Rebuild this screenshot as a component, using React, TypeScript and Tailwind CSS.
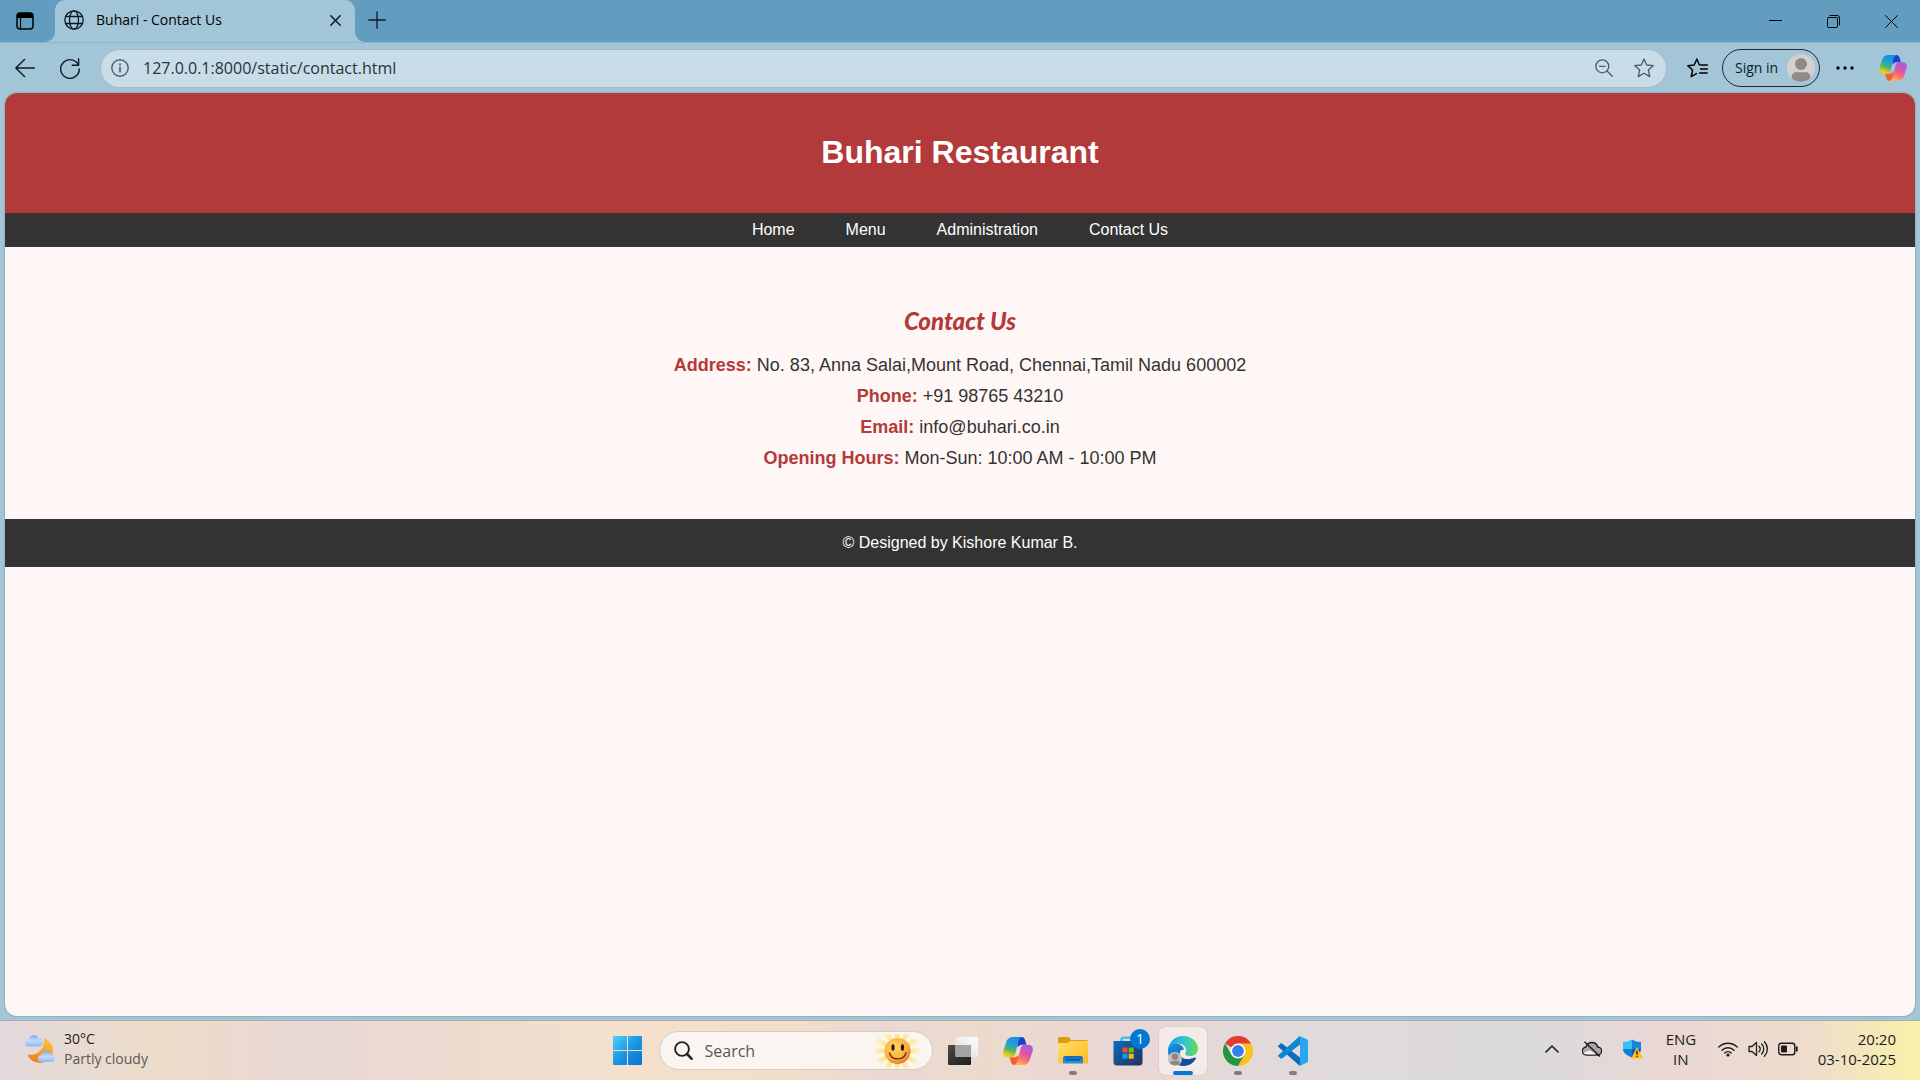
import React from "react";

const pageFont = "font-['Liberation_Sans',Arial,sans-serif]";
const uiFont = "font-['Open_Sans','Noto_Sans',sans-serif]";

/* ---------- shared drawings ---------- */

function CopilotIcon({ id, className }: { id: string; className: string }) {
  const lobe =
    "M10.500 0H19c-2.200.6-3 2.300-3.700 4.500L12.500 16c-.9 3.200-2 4.300-4.200 4.300H4.500C1 20.300-.5 17.500.3 14L3.300 5C4.500 1.500 6.500 0 10.500 0z";
  return (
    <svg viewBox="0 0 30 28" className={className} aria-hidden="true">
      <defs>
        <linearGradient id={`${id}-cool`} x1="0.6" y1="0" x2="0.3" y2="1">
          <stop offset="0" stopColor="#1a8df0" />
          <stop offset="0.35" stopColor="#1f9fd8" />
          <stop offset="0.65" stopColor="#52b56a" />
          <stop offset="0.9" stopColor="#e9cc13" />
        </linearGradient>
        <linearGradient id={`${id}-warm`} x1="0.3" y1="1" x2="0.7" y2="0">
          <stop offset="0" stopColor="#a45bf0" />
          <stop offset="0.45" stopColor="#e2559b" />
          <stop offset="0.75" stopColor="#fb7b6b" />
          <stop offset="1" stopColor="#ffb45a" />
        </linearGradient>
      </defs>
      <path d="M13 0h5.500c2 0 3 1 3.600 3l1.400 4.700h-4.500c-2 0-3.500.8-4.200 2.800z" fill="#1b45c4" />
      <path d="M17 28h-5.500c-2 0-3-1-3.600-3l-1.400-4.700H11c2 0 3.500-.8 4.200-2.800z" fill="#f4602f" />
      <path d={lobe} fill={`url(#${id}-cool)`} />
      <path d={lobe} transform="rotate(180 15 14)" fill={`url(#${id}-warm)`} />
    </svg>
  );
}

const line = {
  fill: "none",
  stroke: "currentColor",
  strokeLinecap: "round" as const,
  strokeLinejoin: "round" as const,
};

/* ---------- browser frame ---------- */

function TabStrip() {
  return (
    <div className="flex h-[42px] shrink-0 items-stretch bg-[#629dbf] text-[#0c1a22]">
      <div className="flex w-[55px] items-center pl-4">
        <button aria-label="Tab actions" className="h-[18px] w-[18px]">
          <svg viewBox="0 0 18 18" className="h-full w-full text-black">
            <rect x="1" y="1" width="16" height="16" rx="3" {...line} strokeWidth="1.5" />
            <path d="M1 6V4a3 3 0 0 1 3-3h10a3 3 0 0 1 3 3v2z" fill="currentColor" />
            <path d="M4.500 6v11" {...line} strokeWidth="1.200" />
          </svg>
        </button>
      </div>
      <div className="relative flex w-[300px] items-center rounded-t-[10px] bg-[#a3c5d8] pt-[2px] pb-1">
        <svg viewBox="0 0 10 10" className="absolute bottom-0 -left-[10px] h-[10px] w-[10px]">
          <path d="M10 0v10H0A10 10 0 0 0 10 0z" fill="#a3c5d8" />
        </svg>
        <svg viewBox="0 0 10 10" className="absolute -right-[10px] bottom-0 h-[10px] w-[10px]">
          <path d="M0 0v10h10A10 10 0 0 1 0 0z" fill="#a3c5d8" />
        </svg>
        <svg viewBox="0 0 20 20" className="ml-[9px] h-5 w-5">
          <g {...line} strokeWidth="1.300">
            <circle cx="10" cy="10" r="9.200" />
            <ellipse cx="10" cy="10" rx="4.500" ry="9.200" />
            <path d="M1.800 6.500h16.400M1.800 13.500h16.400" />
          </g>
        </svg>
        <span className="ml-3 grow text-sm leading-5 text-black">Buhari - Contact Us</span>
        <button aria-label="Close tab" className="mr-[14px] h-[11px] w-[11px]">
          <svg viewBox="0 0 11 11" className="h-full w-full">
            <path d="M.8.8l9.400 9.400M10.200.8L.8 10.200" {...line} strokeWidth="1.500" />
          </svg>
        </button>
      </div>
      <button aria-label="New tab" className="mb-[3px] ml-[13px] w-[18px]">
        <svg viewBox="0 0 18 18" className="h-[18px] w-[18px]">
          <path d="M9 .8v16.400M.8 9h16.400" {...line} strokeWidth="1.300" />
        </svg>
      </button>
      <div className="ml-auto flex items-stretch text-black">
        <button aria-label="Minimize" className="flex w-[58px] items-center justify-center">
          <svg viewBox="0 0 13 13" className="h-[13px] w-[13px]">
            <path d="M0 5.500h13" fill="none" stroke="currentColor" strokeWidth="1" />
          </svg>
        </button>
        <button aria-label="Restore" className="flex w-[58px] items-center justify-center">
          <svg viewBox="0 0 13 13" className="h-[13px] w-[13px]">
            <rect x=".5" y="2.500" width="10" height="10" rx="1" {...line} />
            <path d="M3 .5h7a2.500 2.500 0 0 1 2.500 2.500v7" {...line} />
          </svg>
        </button>
        <button aria-label="Close window" className="flex w-[58px] items-center justify-center">
          <svg viewBox="0 0 13 13" className="h-[13px] w-[13px]">
            <path d="M.5.5l12 12M12.500.5l-12 12" {...line} />
          </svg>
        </button>
      </div>
    </div>
  );
}

function Toolbar() {
  return (
    <div className="flex h-[51px] shrink-0 items-center border-t border-[#8bb6cf] text-[#0c1a22]">
      <button aria-label="Back" className="ml-[15px] h-5 w-5">
        <svg viewBox="0 0 20 20" className="h-full w-full">
          <path d="M19.300 10H.8M9.500 1.500L.8 10l8.700 8.500" {...line} strokeWidth="1.400" />
        </svg>
      </button>
      <button aria-label="Refresh" className="ml-[25px] h-[22px] w-5">
        <svg viewBox="0 0 20 22" className="h-full w-full">
          <path d="M18.500 8.200A9.300 9.300 0 1 0 19.300 12M18.600 1.800v6.400h-6.400" {...line} strokeWidth="1.400" />
        </svg>
      </button>
      <div className="ml-5 flex h-[39px] grow items-center rounded-full border border-[#a9b9c3] bg-[#c9dde8] text-[#4b5c67]">
        <button aria-label="Site information" className="ml-[10px] h-[18px] w-[18px]">
          <svg viewBox="0 0 18 18" className="h-full w-full">
            <circle cx="9" cy="9" r="8.200" {...line} strokeWidth="1.400" />
            <path d="M9 8v5" {...line} strokeWidth="1.600" />
            <circle cx="9" cy="5.300" r="1.100" fill="currentColor" />
          </svg>
        </button>
        <input
          aria-label="Address"
          defaultValue="127.0.0.1:8000/static/contact.html"
          className="ml-[14px] min-w-0 grow bg-transparent text-base leading-6 text-[#25333c] outline-none"
        />
        <button aria-label="Zoom" className="h-[18px] w-[18px]">
          <svg viewBox="0 0 18 18" className="h-full w-full">
            <circle cx="7.300" cy="7.300" r="6.500" {...line} strokeWidth="1.300" />
            <path d="M12 12l5.300 5.300M4.500 7.300h5.600" {...line} strokeWidth="1.300" />
          </svg>
        </button>
        <button aria-label="Add to favorites" className="mr-3 ml-[21px] h-5 w-5">
          <svg viewBox="0 0 20 20" className="h-full w-full">
            <path d="M10 1l2.700 6 6.500.7-4.900 4.300 1.500 6.600L10 15.300l-5.800 3.300L5.700 12 .8 7.700 7.300 7z" {...line} strokeWidth="1.300" />
          </svg>
        </button>
      </div>
      <button aria-label="Favorites" className="ml-5 h-5 w-[21px]">
        <svg viewBox="0 0 21 20" className="h-full w-full text-black">
          <path d="M12.500 6.800h-.3L9.900 1 7.200 7 .8 7.700 5.600 12l-1.400 6.600 5.200-3M13.500 6.900h6.800M13.500 11h6.800M12.500 15h7.800" {...line} strokeWidth="1.500" />
        </svg>
      </button>
      <button className="ml-[14px] flex h-[38px] w-[98px] items-center justify-between rounded-full border border-[#1b2a33] pr-1 pl-3 text-sm leading-5">
        Sign in
        <svg viewBox="0 0 28 28" className="h-7 w-7" aria-hidden="true">
          <circle cx="14" cy="14" r="14" fill="#d3d0cd" />
          <circle cx="14" cy="10" r="6" fill="#8f8a87" />
          <path d="M4.500 24c0-4 2-5.800 5-5.800h9c3 0 5 1.800 5 5.800a14 14 0 0 1-19 0z" fill="#8f8a87" />
        </svg>
      </button>
      <button aria-label="Settings and more" className="ml-4 h-4 w-[18px]">
        <svg viewBox="0 0 18 16" className="h-full w-full text-black" fill="currentColor">
          <circle cx="2" cy="8" r="1.700" />
          <circle cx="9" cy="8" r="1.700" />
          <circle cx="16" cy="8" r="1.700" />
        </svg>
      </button>
      <button aria-label="Copilot" className="mr-[13px] ml-[25px]">
        <CopilotIcon id="bar-copilot" className="h-[26px] w-7" />
      </button>
    </div>
  );
}

/* ---------- web page ---------- */

const links = ["Home", "Menu", "Administration", "Contact Us"];

const details = [
  ["Address:", "No. 83, Anna Salai,Mount Road, Chennai,Tamil Nadu 600002"],
  ["Phone:", "+91 98765 43210"],
  ["Email:", "info@buhari.co.in"],
  ["Opening Hours:", "Mon-Sun: 10:00 AM - 10:00 PM"],
];

function ContactPage() {
  return (
    <div className={`mx-[5px] mb-1 grow overflow-hidden rounded-xl bg-[#fff7f5] text-center shadow-[0_0_2px_#5f8296] ${pageFont}`}>
      <header className="bg-[#b23a3a] pt-[41px] pb-[43px] text-white">
        <h1 className="text-[32px] leading-9 font-bold">Buhari Restaurant</h1>
      </header>
      <nav className="flex justify-center gap-[51px] bg-[#333333] py-2 text-base leading-[18px] text-white">
        {links.map((l) => (
          <a key={l} href="#">
            {l}
          </a>
        ))}
      </nav>
      <main className="pt-[60px] pb-[45px] text-[#333333]">
        <h2 className="mb-[15px] font-['Gill_Sans_MT',Lato,sans-serif] text-2xl leading-7 font-black text-[#b23a3a] italic">
          Contact Us
        </h2>
        {details.map(([label, value]) => (
          <p key={label} className="text-lg leading-[31px]">
            <strong className="text-[#b23a3a]">{label}</strong> {value}
          </p>
        ))}
      </main>
      <footer className="bg-[#333333] py-[15px] text-base leading-[18px] text-white">
        © Designed by Kishore Kumar B.
      </footer>
    </div>
  );
}

/* ---------- taskbar ---------- */

function WeatherIcon() {
  return (
    <svg viewBox="0 0 30 28" className="h-7 w-[30px]" aria-hidden="true">
      <defs>
        <linearGradient id="moon" x1="0.8" y1="0" x2="0.2" y2="1">
          <stop offset="0" stopColor="#f6c544" />
          <stop offset="1" stopColor="#ef7d1a" />
        </linearGradient>
        <linearGradient id="cloud" x1="0" y1="0" x2="0" y2="1">
          <stop offset="0" stopColor="#7fa9f2" />
          <stop offset="0.5" stopColor="#c3dafc" />
          <stop offset="1" stopColor="#8fb4f3" />
        </linearGradient>
      </defs>
      <path d="M19 3c7 3 10.500 9 8.500 15.500C25 27 16 30 9 26.500 5.500 25 3.500 22.500 2.500 19.500 12 21.500 20 14.500 19 3z" fill="url(#moon)" />
      <path d="M4 11.500a3.500 3.500 0 0 1-.4-7C4.500 1.500 6.500 0 9 0c2.300 0 4 1.300 4.700 3.500C16 3.500 18 5.500 18 7.700c0 2.200-1.600 3.800-3.800 3.800z" fill="url(#cloud)" />
      <path d="M16 27a3.400 3.400 0 0 1-.2-6.700c.8-2.800 2.700-4.300 5.200-4.300 2.400 0 4 1.200 4.700 3.400 2.500 0 4.300 1.700 4.300 3.900S28.300 27 26.200 27z" fill="url(#cloud)" />
    </svg>
  );
}

function SunIcon() {
  return (
    <svg viewBox="0 0 48 34" className="h-[34px] w-12" aria-hidden="true">
      <defs>
        <radialGradient id="sun" cx="0.4" cy="0.35" r="0.7">
          <stop offset="0" stopColor="#ffd85e" />
          <stop offset="0.7" stopColor="#fbab38" />
          <stop offset="1" stopColor="#df7038" />
        </radialGradient>
        <radialGradient id="ray" gradientUnits="userSpaceOnUse" cx="24" cy="17" r="25">
          <stop offset="0.5" stopColor="#fde476" />
          <stop offset="1" stopColor="#fde476" stopOpacity="0" />
        </radialGradient>
      </defs>
      <g fill="url(#ray)">
        {[0, 30, 60, 90, 120, 150, 180, 210, 240, 270, 300, 330].map((a) => (
          <path key={a} d="M24 17L48 13.500v7z" transform={`rotate(${a} 24 17)`} />
        ))}
      </g>
      <circle cx="24.500" cy="17" r="13" fill="url(#sun)" />
      <ellipse cx="20" cy="13.500" rx="1.600" ry="3.200" fill="#1b1a1a" />
      <ellipse cx="29.500" cy="13.500" rx="1.600" ry="3.200" fill="#1b1a1a" />
      <path d="M16.500 19c2 8 14.500 8 16.500-.3" fill="none" stroke="#4a2a12" strokeWidth="1.200" strokeLinecap="round" />
    </svg>
  );
}

function TaskViewIcon() {
  return (
    <svg viewBox="0 0 30 28" className="h-7 w-[30px]">
      <defs>
        <linearGradient id="tv" x1="0" y1="0" x2="1" y2="1">
          <stop offset="0" stopColor="#4a4a48" />
          <stop offset="1" stopColor="#1d1d1c" />
        </linearGradient>
        <linearGradient id="tv2" x1="0" y1="1" x2="1" y2="0">
          <stop offset="0" stopColor="#d9d9d9" />
          <stop offset="1" stopColor="#ffffff" />
        </linearGradient>
      </defs>
      <rect x="0" y="8" width="23" height="20" rx="1" fill="url(#tv)" />
      <rect x="7.500" y="0" width="22.500" height="20" rx="1" fill="url(#tv2)" />
      <path d="M7.500 8H23v12H8.500a1 1 0 0 1-1-1z" fill="#a3a3a2" />
    </svg>
  );
}

function ExplorerIcon() {
  return (
    <svg viewBox="0 0 30 27" className="h-[27px] w-[30px]">
      <defs>
        <linearGradient id="fold" x1="0" y1="0" x2="1" y2="1">
          <stop offset="0" stopColor="#ffdd6b" />
          <stop offset="1" stopColor="#fbbb1f" />
        </linearGradient>
        <linearGradient id="tray" x1="0" y1="0" x2="0" y2="1">
          <stop offset="0" stopColor="#0f68bd" />
          <stop offset="1" stopColor="#1f9be8" />
        </linearGradient>
      </defs>
      <path d="M0 1.500A1.500 1.500 0 0 1 1.500 0h8c1 0 1.500.4 2 1l1.500 2h15.500A1.500 1.500 0 0 1 30 4.500V9H0z" fill="#dd9d0c" />
      <path d="M0 6h9c1 0 1.500-.3 2-.8l1.300-1.200H30v22.500H0z" fill="url(#fold)" />
      <path d="M5 26.500v-5a2.500 2.500 0 0 1 2.500-2.500h15a2.500 2.500 0 0 1 2.500 2.500v5z" fill="url(#tray)" />
      <path d="M8.500 22.800h13" stroke="#0a4682" strokeWidth="1.200" strokeLinecap="round" />
    </svg>
  );
}

function StoreIcon() {
  return (
    <svg viewBox="0 0 30 30" className="h-[30px] w-[30px]">
      <defs>
        <linearGradient id="bag" x1="0" y1="0" x2="1" y2="1">
          <stop offset="0" stopColor="#0b6cbf" />
          <stop offset="1" stopColor="#25315d" />
        </linearGradient>
      </defs>
      <path d="M8.500 8V2.800c0-.8.4-1.200 1.200-1.200h10.600c.8 0 1.200.4 1.200 1.200V8" fill="none" stroke="#35b8f1" strokeWidth="1.800" />
      <path d="M.5 5h29v21a3.500 3.500 0 0 1-3.500 3.500H4A3.500 3.500 0 0 1 .5 26z" fill="url(#bag)" />
      <path d="M8.500 5V2.800c0-.8.4-1.200 1.200-1.200h10.600" fill="none" stroke="#35b8f1" strokeWidth="1.800" />
      <path d="M9.500 11.500h5v5h-5z" fill="#f25022" />
      <path d="M15.700 11.500h5v5h-5z" fill="#7fba00" />
      <path d="M9.500 17.700h5v5h-5z" fill="#00a4ef" />
      <path d="M15.700 17.700h5v5h-5z" fill="#ffb900" />
    </svg>
  );
}

function EdgeIcon() {
  return (
    <svg viewBox="0 0 30 30" className="h-[30px] w-[30px]">
      <defs>
        <linearGradient id="eg" x1="0" y1="0.5" x2="1" y2="0.5">
          <stop offset="0" stopColor="#1e9fe0" />
          <stop offset="0.5" stopColor="#2bc3d2" />
          <stop offset="1" stopColor="#6bd95a" />
        </linearGradient>
        <linearGradient id="eb" x1="0" y1="0" x2="1" y2="1">
          <stop offset="0" stopColor="#1e8fe0" />
          <stop offset="1" stopColor="#0d5cab" />
        </linearGradient>
      </defs>
      <path d="M0 15C0 8 4 7 8.500 7.500c5 .6 7.500 4 7.300 6.500-1.500-1-3.800 0-4 3C11.600 22 17 26 24 24c-2 4-6 6-10 5.800C6 29.500 0 23 0 15z" fill="url(#eb)" />
      <path d="M11.700 16.500c0 6 6.500 7.700 12 6 1.500-.5 4.500-2 4.300-.3C26 27 20.500 30.500 14 29.800 8.500 28 7 20 11.700 16.500z" fill="#124f9e" />
      <path d="M0 14C.8 6 7 0 15 0c8.500 0 15 6 15 12.500 0 5-3.500 7.500-7.500 7.500-3 0-5.300-1-5.300-2.300 0-1 1-1.300 1-3.700 0-3.500-3.500-6.500-8.700-6.500C5 7.500 1.500 10 0 14z" fill="url(#eg)" />
      <circle cx="7" cy="23" r="7" fill="#c3bfbd" />
      <circle cx="7" cy="20.700" r="3.200" fill="#8b8784" />
      <path d="M2.300 27.500c0-2 1-2.800 2.700-2.800h4c1.700 0 2.700.8 2.700 2.800a7 7 0 0 1-9.400 0z" fill="#8b8784" />
    </svg>
  );
}

function ChromeIcon() {
  return (
    <svg viewBox="0 0 30 30" className="h-[30px] w-[30px]">
      <path d="M15 15L2 7.500A15 15 0 0 1 28 7.500z" fill="#e33b2e" />
      <path d="M15 7.500h13A15 15 0 0 1 15 30l6.500-11.200z" fill="#fcc21b" />
      <path d="M21.500 18.700L15 30A15 15 0 0 1 2 7.500l6.500 11.200z" fill="#23963f" />
      <circle cx="15" cy="15" r="7.500" fill="#fff" />
      <circle cx="15" cy="15" r="5.900" fill="#3b7ded" />
    </svg>
  );
}

function VsCodeIcon() {
  return (
    <svg viewBox="0 0 30 30" className="h-[30px] w-[30px]">
      <path d="M.5 9.500l2-1.800c.6-.5 1.200-.5 1.800 0L22 21.500V29.500c-.5 0-.9-.2-1.300-.6L.5 11c-.6-.5-.6-1 0-1.500z" fill="#0a6ebd" />
      <path d="M.5 20.500l2 1.800c.6.500 1.200.5 1.800 0L22 8.500V.5c-.5 0-.9.2-1.300.6L.5 19c-.6.500-.6 1 0 1.500z" fill="#0f86d0" />
      <path d="M22 .2l6.800 3c.8.400 1.200 1 1.200 1.800v20c0 .8-.4 1.400-1.200 1.800l-6.800 3c-.9.300-1.300 0-1.800-.6.800.6 1.800.2 1.800-1V1.800c0-1.200-1-1.600-1.800-1 .5-.6.900-.9 1.800-.6z" fill="#27a7f2" />
    </svg>
  );
}

function AppButton({
  label,
  running,
  active,
  children,
}: {
  label: string;
  running?: boolean;
  active?: boolean;
  children: React.ReactNode;
}) {
  return (
    <div className="flex w-[55px] justify-center">
      <button
        aria-label={label}
        className={
          active
            ? "relative flex h-12 w-12 items-center justify-center rounded-md bg-[#f4ebe9] shadow-[0_0_1px_#9c8f8b]"
            : "relative flex h-12 w-12 items-center justify-center"
        }
      >
        {children}
        {running && <span className="absolute bottom-0 h-1 w-2 rounded-full bg-[#857c79]" />}
        {active && <span className="absolute bottom-0 h-1 w-5 rounded-full bg-[#0078d4]" />}
      </button>
    </div>
  );
}

function Taskbar() {
  return (
    <div className="grid h-[60px] shrink-0 grid-cols-[1fr_auto_1fr] items-center border-t border-[#b5aaa6] bg-[linear-gradient(90deg,#e3d9dc_0%,#ecdcc9_8%,#e8d8d4_16%,#ecdcd0_24%,#f4e0cd_32%,#f2dfcb_41%,#ead8d4_46%,#eddacd_50%,#ead7d4_58%,#e0dadb_68%,#dcdadb_80%,#ead7d5_87%,#eedccd_94%,#f3e6bd_97%,#f8f1a8_100%)] text-[#1c1c1c]">
      <button className="ml-[25px] flex items-center gap-[9px] justify-self-start pb-[3px] text-left text-sm leading-5">
        <WeatherIcon />
        <span>
          <span className="block">30°C</span>
          <span className="block text-[#5c5856]">Partly cloudy</span>
        </span>
      </button>

      <div className="flex items-center">
        <AppButton label="Start">
          <svg viewBox="0 0 29 29" className="h-[29px] w-[29px]">
            <defs>
              <linearGradient id="win" gradientUnits="userSpaceOnUse" x1="0" y1="0" x2="29" y2="29">
                <stop offset="0" stopColor="#4fd0fd" />
                <stop offset="0.5" stopColor="#1a97e3" />
                <stop offset="1" stopColor="#0673cf" />
              </linearGradient>
            </defs>
            <path d="M1 0h13v14H0V1a1 1 0 0 1 1-1zM15 0h13a1 1 0 0 1 1 1v13H15zM0 15h14v14H1a1 1 0 0 1-1-1zM15 15h14v13a1 1 0 0 1-1 1H15z" fill="url(#win)" />
          </svg>
        </AppButton>
        <div className="mr-[3px] ml-1 flex h-[39px] w-[274px] items-center rounded-full border border-[#d8c9c2] bg-[#faf5f1] pr-[11px] pl-[14px]">
          <svg viewBox="0 0 19 19" className="h-[19px] w-[19px] shrink-0" aria-hidden="true">
            <circle cx="8" cy="8" r="6.900" fill="none" stroke="#222" strokeWidth="1.900" />
            <path d="M13 13l4.500 4.700" stroke="#222" strokeWidth="2.600" strokeLinecap="round" />
          </svg>
          <input
            aria-label="Search"
            placeholder="Search"
            className="ml-3 w-0 min-w-0 grow bg-transparent text-base leading-6 outline-none placeholder:text-[#5a5654]"
          />
          <SunIcon />
        </div>
        <AppButton label="Task view">
          <TaskViewIcon />
        </AppButton>
        <AppButton label="Copilot">
          <CopilotIcon id="task-copilot" className="h-7 w-[30px]" />
        </AppButton>
        <AppButton label="File Explorer" running>
          <ExplorerIcon />
        </AppButton>
        <AppButton label="Microsoft Store">
          <StoreIcon />
          <span className="absolute top-[2px] right-[2px] h-5 w-5 rounded-full bg-[#0078d4] text-center text-sm leading-5 text-white">
            1
          </span>
        </AppButton>
        <AppButton label="Microsoft Edge" active>
          <EdgeIcon />
        </AppButton>
        <AppButton label="Google Chrome" running>
          <ChromeIcon />
        </AppButton>
        <AppButton label="Visual Studio Code" running>
          <VsCodeIcon />
        </AppButton>
      </div>

      <div className="mr-6 flex items-center justify-self-end pb-[3px] text-[15px] leading-5">
        <button aria-label="Show hidden icons" className="h-[14px] w-[14px]">
          <svg viewBox="0 0 14 14" className="h-full w-full">
            <path d="M1 10l6-6 6 6" {...line} strokeWidth="1.600" />
          </svg>
        </button>
        <button aria-label="OneDrive" className="ml-[23px] h-4 w-5">
          <svg viewBox="0 0 20 16" className="h-full w-full">
            <path d="M4.500 14a4 4 0 0 1-.5-8c1-3 3-4.500 6-4.500s5 1.700 5.700 4.500a4 4 0 0 1-.2 8z" fill="#aaa7a6" stroke="#1c1c1c" strokeWidth="1.300" />
            <path d="M1.500 12.500C4 9.500 8 9 11 11l3 2.400H4.500z" fill="#f0eeee" />
            <path d="M2.500.8L18 15.500" stroke="#1c1c1c" strokeWidth="1.500" />
          </svg>
        </button>
        <button aria-label="Windows Security" className="ml-[21px] h-5 w-5">
          <svg viewBox="0 0 20 20" className="h-full w-full">
            <path d="M9 .5v9.500H0V3c3.500 0 6-.8 9-2.500z" fill="#35c2f4" />
            <path d="M9 .5C12 2.200 14.500 3 18 3v7H9z" fill="#1186dc" />
            <path d="M0 10h9v8.500C4 16.500 0 14 0 10z" fill="#0f7fd8" />
            <path d="M9 10h9c0 4-4 6.500-9 8.500z" fill="#0a5cb5" />
            <path d="M14 8l6 11.500H8z" fill="#fdc116" />
            <path d="M14 11.800v4" stroke="#222" strokeWidth="1.400" />
            <circle cx="14" cy="17.500" r=".8" fill="#222" />
          </svg>
        </button>
        <button className="ml-[23px] w-[30px] text-center">
          <span className="block">ENG</span>
          <span className="block">IN</span>
        </button>
        <button aria-label="Network, volume and battery" className="ml-[22px] flex items-center gap-[10px]">
          <svg viewBox="0 0 20 16" className="h-4 w-5">
            <path d="M.8 6a13 13 0 0 1 18.400 0M4 9.200a8.500 8.500 0 0 1 12 0M6.800 12a4.500 4.500 0 0 1 6.400 0" {...line} strokeWidth="1.400" />
            <circle cx="10" cy="14" r="1.600" fill="currentColor" />
          </svg>
          <svg viewBox="0 0 20 18" className="h-[18px] w-5">
            <path d="M1 6.500h3L8.500 2.500v13L4 11.500H1zM11 6.300a4 4 0 0 1 0 5.400M13.700 4a7.200 7.200 0 0 1 0 10M16.400 1.700a10.500 10.500 0 0 1 0 14.600" {...line} strokeWidth="1.300" />
          </svg>
          <svg viewBox="0 0 20 14" className="h-[14px] w-5">
            <rect x=".8" y="1.200" width="16" height="11.600" rx="2.500" {...line} strokeWidth="1.400" />
            <rect x="3" y="3.400" width="6" height="7.200" rx="1" fill="currentColor" />
            <path d="M18.800 5.200v3.600" {...line} strokeWidth="1.800" />
          </svg>
        </button>
        <button className="ml-5 text-right">
          <span className="block">20:20</span>
          <span className="block">03-10-2025</span>
        </button>
      </div>
    </div>
  );
}

export default function App() {
  return (
    <div className={`flex min-h-screen flex-col bg-[#a3c5d8] ${uiFont}`}>
      <TabStrip />
      <Toolbar />
      <ContactPage />
      <Taskbar />
    </div>
  );
}
